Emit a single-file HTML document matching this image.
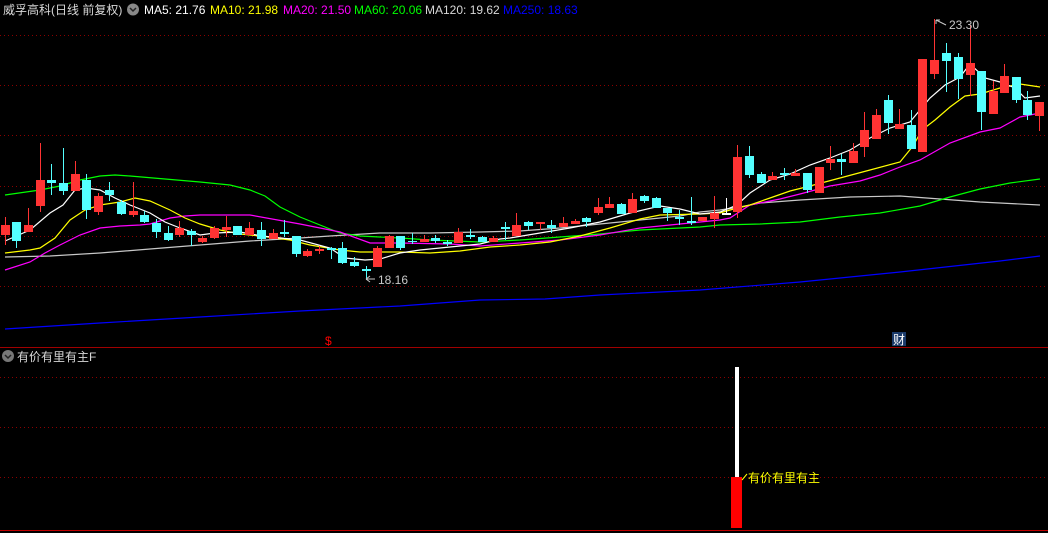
<!DOCTYPE html>
<html><head><meta charset="utf-8"><style>
html,body{margin:0;padding:0;background:#000;width:1048px;height:533px;overflow:hidden}
svg{display:block}
text{font-family:"Liberation Sans","Noto Sans CJK SC",sans-serif;font-size:12px}
</style></head><body>
<svg width="1048" height="533" xmlns="http://www.w3.org/2000/svg">
<rect width="1048" height="533" fill="#000"/>
<g stroke="#8b0000" stroke-width="1" stroke-dasharray="1,3">
<line x1="0" y1="35.5" x2="1048" y2="35.5"/><line x1="0" y1="85.5" x2="1048" y2="85.5"/>
<line x1="0" y1="135.5" x2="1048" y2="135.5"/><line x1="0" y1="186.5" x2="1048" y2="186.5"/>
<line x1="0" y1="236.5" x2="1048" y2="236.5"/><line x1="0" y1="286.5" x2="1048" y2="286.5"/>
<line x1="0" y1="377.5" x2="1048" y2="377.5"/><line x1="0" y1="427.5" x2="1048" y2="427.5"/>
<line x1="0" y1="477.5" x2="1048" y2="477.5"/>
</g>
<line x1="0" y1="347.5" x2="1048" y2="347.5" stroke="#a00000"/>
<line x1="0" y1="530.5" x2="1048" y2="530.5" stroke="#c00000"/>
<g fill="none" stroke-width="1.2">
<polyline stroke="#0000ff" points="5,329 100,323 200,317 300,311 400,306 480,300 545,299 600,295 700,290 800,282 900,272 1000,261 1040,256"/>
<polyline stroke="#c8c8c8" points="5,257 50,256 100,253 150,249 200,245 250,241 300,238 330,236 380,233 430,233 480,232 520,231 560,228 600,224 640,220 680,216 700,212 720,210 740,207 760,203 800,200 850,197 900,196 940,199 980,202 1040,205"/>
<polyline stroke="#00ff00" points="5,195 40,190 60,186 80,180 100,176 115,175 130,176 200,182 230,185 250,190 265,196 280,207 300,217 320,225 340,233 360,236 400,238 430,240 480,242 520,240 560,237 600,234 640,230 700,227 720,225 760,224 800,222 840,217 880,213 920,206 950,197 980,189 1010,183 1040,179"/>
<polyline stroke="#ff00ff" points="5,270 30,262 45,253 60,245 80,235 100,228 120,226 140,225 150,224 170,218 185,216 200,215 250,215 300,224 340,232 370,243 400,243 450,244 480,246 520,243 560,240 600,235 640,228 660,226 700,222 720,220 730,218 750,205 780,199 800,194 830,186 860,181 880,175 900,167 920,160 950,143 980,132 1000,128 1020,117 1040,113"/>
<polyline stroke="#ffff00" points="5,253 30,250 40,248 55,238 70,220 85,210 100,205 120,202 135,198 150,201 170,210 185,218 200,224 220,230 240,234 260,236 290,240 310,245 340,250 360,252 400,252 430,253 460,251 490,247 520,245 550,242 580,236 610,228 640,219 660,215 700,214 720,213 730,210 750,205 770,198 790,191 810,186 840,178 870,170 900,162 913,146 922,130 935,120 950,107 965,96 980,94 1000,88 1020,84 1040,87"/>
<polyline stroke="#ffffff" points="5,241 30,230 50,213 63,205 75,190 86,188 100,190 115,198 130,205 150,213 165,222 180,228 200,235 215,233 240,232 262,236 300,240 330,248 345,258 365,260 380,259 400,253 420,250 440,248 460,246 480,244 500,239 510,238 540,233 570,228 600,222 630,213 660,206 680,209 700,214 720,212 737,205 750,193 770,180 790,174 810,165 830,158 850,150 870,138 890,128 910,122 920,110 930,98 945,85 960,77 970,64 985,78 1000,82 1015,88 1025,98 1040,96"/>
</g>
<g id="c"></g>
<text x="378" y="284" fill="#c8c8c8">18.16</text>
<path d="M375,279 H366 M366,279 l4,-3 M366,279 l4,3" stroke="#c8c8c8" fill="none"/>
<text x="949" y="29" fill="#c8c8c8">23.30</text>
<path d="M936,20 l10,5 M936,20 l0,4 M936,20 l4,0" stroke="#c8c8c8" fill="none"/>
<text x="325" y="345" fill="#ff0000" font-size="11">$</text>
<rect x="892" y="332" width="14" height="14" fill="#1a3a6a"/>
<text x="893" y="344" fill="#fff" font-size="12">财</text>
<text x="3" y="14" fill="#d8d8d8">威孚高科(日线 前复权)</text>
<circle cx="133" cy="9.5" r="6" fill="#888"/><path d="M130,8 l3,3 l3,-3" stroke="#222" fill="none" stroke-width="1.5"/>
<text x="144" y="14" fill="#fff">MA5: 21.76</text>
<text x="210" y="14" fill="#ffff00">MA10: 21.98</text>
<text x="283" y="14" fill="#ff00ff">MA20: 21.50</text>
<text x="354" y="14" fill="#00ff00">MA60: 20.06</text>
<text x="425" y="14" fill="#d8d8d8">MA120: 19.62</text>
<text x="503" y="14" fill="#0000ff">MA250: 18.63</text>
<circle cx="8" cy="356" r="6" fill="#777"/><path d="M5,355 l3,3 l3,-3" stroke="#222" fill="none" stroke-width="1.5"/>
<text x="17" y="361" fill="#d8d8d8">有价有里有主F</text>
<rect x="735" y="367" width="4" height="110" fill="#fff"/>
<rect x="731" y="477" width="11" height="51" fill="#ff0000"/>
<path d="M742,480 l5,-6" stroke="#ffff00"/>
<text x="748" y="482" fill="#ffff00">有价有里有主</text>
</svg>
<script>
var d=[[5,'r',225,235,217,245],[16,'c',222,241,222,248],[28,'r',225,232,208,232],[40,'r',180,206,143,212],[51,'c',180,183,164,195],[63,'c',183,191,148,195],[75,'r',174,191,161,191],[86,'c',180,210,174,219],[98,'r',196,212,193,215],[109,'c',190,195,182,201],[121,'c',202,214,200,215],[133,'r',211,215,182,217],[144,'c',215,222,211,223],[156,'c',223,232,219,238],[168,'c',233,240,226,241],[179,'r',228,235,221,237],[191,'c',231,235,229,246],[202,'r',238,242,236,243],[214,'r',228,238,226,239],[226,'r',227,230,216,237],[237,'c',226,235,226,235],[249,'r',228,235,222,235],[261,'c',230,239,222,246],[273,'r',233,239,229,239],[284,'c',232,234,220,237],[296,'c',236,254,236,257],[307,'r',251,256,249,257],[319,'r',249,251,246,254],[331,'c',248,250,247,259],[342,'c',248,263,242,264],[354,'c',262,266,257,267],[366,'c',269,271,266,280],[377,'r',248,267,246,267],[389,'r',236,248,235,248],[400,'c',236,248,236,250],[412,'c',241,242,233,244],[424,'r',239,242,235,242],[435,'c',238,241,235,243],[447,'c',242,244,240,246],[458,'r',232,243,228,243],[470,'c',235,237,229,239],[482,'c',237,242,236,242],[493,'r',238,242,236,242],[505,'c',227,229,222,240],[516,'r',225,236,213,236],[528,'c',222,226,221,230],[540,'r',222,224,222,230],[551,'c',225,228,220,233],[563,'r',223,227,217,227],[575,'r',221,224,219,224],[586,'c',218,222,217,227],[598,'r',207,213,198,215],[609,'r',204,208,197,208],[621,'c',204,214,203,214],[632,'r',199,213,193,213],[644,'c',196,201,195,203],[656,'c',198,208,197,208],[667,'c',208,213,208,221],[679,'c',217,219,210,225],[691,'c',221,223,197,225],[702,'r',217,221,217,221],[714,'r',213,219,196,228],[726,'w',213,215,198,215],[737,'r',157,212,145,218],[749,'c',156,175,146,178],[761,'c',174,183,172,183],[772,'r',176,180,172,180],[784,'c',173,175,168,180],[795,'r',173,176,169,176],[807,'c',173,190,173,193],[819,'r',167,193,167,193],[830,'r',159,163,146,170],[841,'c',159,162,154,175],[853,'r',151,163,143,163],[864,'r',130,147,112,157],[876,'r',115,139,109,139],[888,'c',100,123,95,134],[899,'r',124,129,109,129],[911,'c',125,149,110,149],[922,'r',59,152,59,152],[934,'r',60,74,19,79],[946,'c',53,61,43,92],[958,'c',57,79,53,99],[970,'r',63,75,25,96],[981,'c',71,112,71,130],[993,'r',91,114,81,114],[1004,'r',76,93,64,93],[1016,'c',77,100,77,103],[1027,'c',100,115,91,120],[1039,'r',102,116,102,131]];
var g=document.getElementById('c'),s='',col={r:'#ff3333',c:'#54ffff',w:'#ffffff'};
d.forEach(function(a){var x=a[0],f=col[a[1]];s+='<line x1="'+(x+.5)+'" y1="'+a[4]+'" x2="'+(x+.5)+'" y2="'+a[5]+'" stroke="'+f+'"/>';s+='<rect x="'+(x-4)+'" y="'+a[2]+'" width="9" height="'+Math.max(1,a[3]-a[2])+'" fill="'+f+'"/>';});
g.innerHTML=s;
</script>
</body></html>
